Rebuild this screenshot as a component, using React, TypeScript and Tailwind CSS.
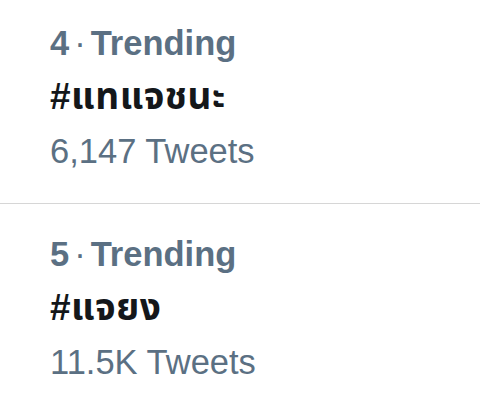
const trends = [
  { rank: 4, tag: '#แทแจชนะ', count: '6,147 Tweets' },
  { rank: 5, tag: '#แจยง', count: '11.5K Tweets' },
]

const TrendItem = ({ rank, tag, count, first }: { rank: number; tag: string; count: string; first?: boolean }) => {
  return (
    <div className={first ? 'px-[50px] pt-4 pb-[25px]' : 'px-[50px] pt-[23px] pb-[25px]'}>
      <div className="text-[34.5px] leading-[54px] font-bold text-[#5b7083]">
        {rank}
        <span className="mx-[5px] font-normal">·</span>
        Trending
      </div>
      <div className="text-[37px] leading-[54px] font-bold tracking-[0.5px] text-[#14171a]">{tag}</div>
      <div className="text-[34.5px] leading-[54px] text-[#5b7083]">{count}</div>
    </div>
  )
}

export default function App() {
  return (
    <div
      className="h-[404px] w-[480px] overflow-hidden bg-white"
      style={{ fontFamily: '"Liberation Sans", "Noto Sans Thai", "Noto Sans", sans-serif' }}
    >
      {trends.map((t, i) => (
        <div key={t.rank}>
          {i > 0 && <div className="h-px bg-[#d6d6d6]" />}
          <TrendItem {...t} first={i === 0} />
        </div>
      ))}
    </div>
  )
}
